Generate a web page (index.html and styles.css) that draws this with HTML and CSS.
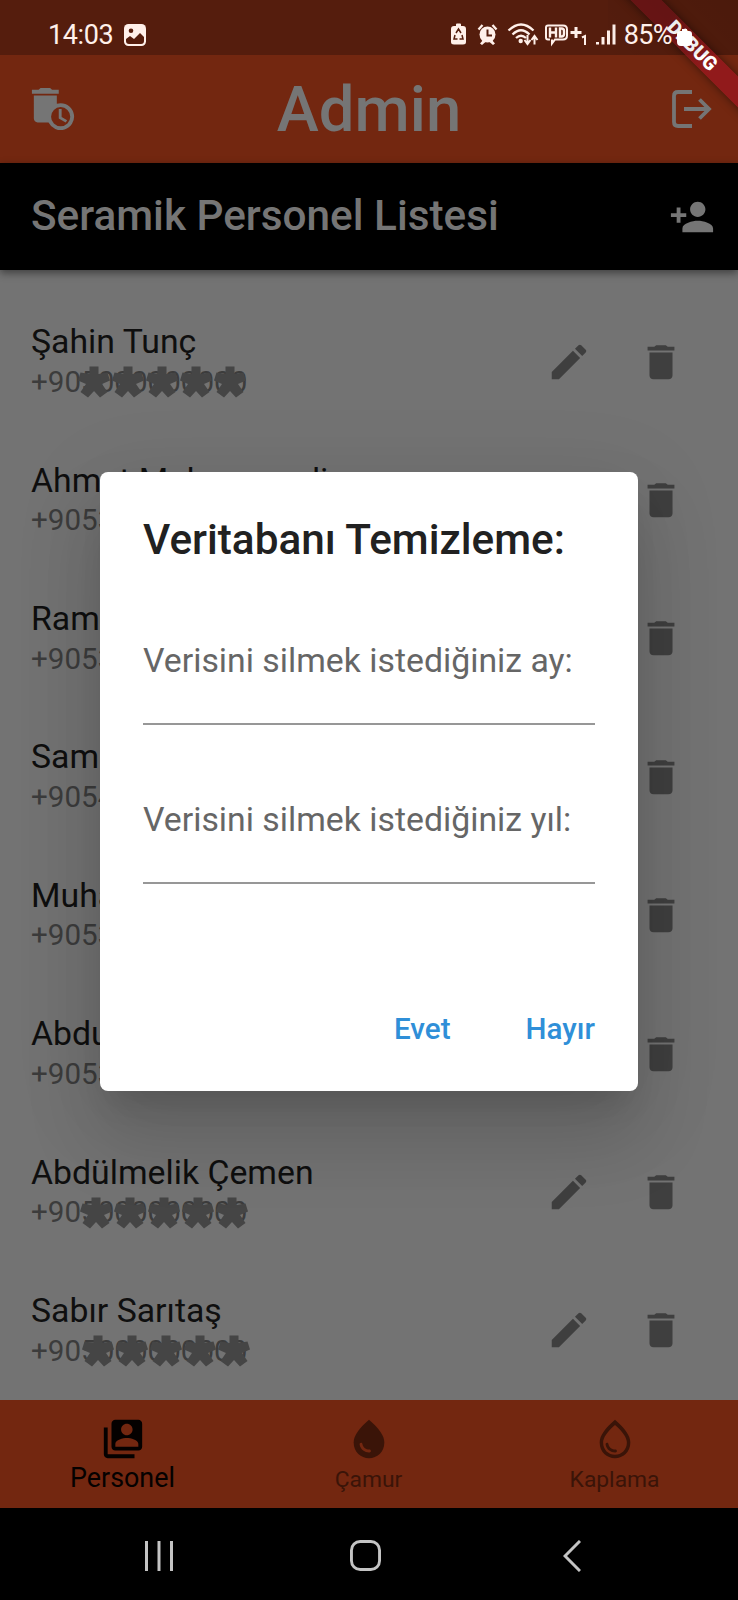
FILE: index.html
```html
<!DOCTYPE html>
<html lang="tr">
<head>
<meta charset="utf-8">
<title>Admin</title>
<link rel="stylesheet" href="styles.css">
</head>
<body>
<svg class="defs" width="0" height="0" aria-hidden="true">
  <symbol id="edit" viewBox="0 0 24 24"><path d="M3 17.25V21h3.75L17.81 9.94l-3.75-3.75L3 17.25zM20.71 7.04a1 1 0 0 0 0-1.41l-2.34-2.34a1 1 0 0 0-1.41 0l-1.83 1.83 3.75 3.75 1.83-1.83z"/></symbol>
  <symbol id="trash" viewBox="0 0 24 24"><path d="M6 19c0 1.1.9 2 2 2h8c1.1 0 2-.9 2-2V7H6v12zM19 4h-3.500l-1-.8h-5l-1 .8H5v2h14V4z"/></symbol>
  <symbol id="star" viewBox="-17 -17 34 34"><path d="M-4.500-15.500H4.500V-8L13.500-9.500L16-1.500L8 2L13.500 10L6 15.500L0 9L-6 15.500L-13.500 10L-8 2L-16-1.500L-13.500-9.500L-4.500-8z" fill="currentColor"/></symbol>
</svg>
<div class="screen">
  <header class="status">
    <span class="clock">14:03</span>
    <svg class="st-pic" viewBox="0 0 22 22"><rect width="22" height="22" rx="4.500" fill="#fff0ea"/><circle cx="7" cy="6.800" r="2.300" fill="#551d0d"/><path d="M2 15l4-3 4 3 6-6 4 4v4q0 3-3 3H5q-3 0-3-3z" fill="#551d0d"/></svg>
    <span class="grow"></span>
    <svg class="st-icons" viewBox="0 0 170 26">
      <g fill="#fff0ea">
        <path d="M6 4V2.500Q6 1.500 7 1.500h3q1 0 1 1V4h2q3 0 3 3v13q0 2.500-3 2.500H4Q1 22.500 1 20V7q0-3 3-3z"/>
        <circle cx="37.500" cy="12.500" r="8"/>
        <path d="M33 18l-3 3.500 2 1.500 3.500-3zM42 18l3 3.500-2 1.500-3.500-3z"/>
        <circle cx="70.700" cy="19" r="2.200"/>
        <rect x="146" y="20" width="3" height="2.500"/><rect x="151.500" y="15" width="3" height="7.500"/><rect x="157" y="8.500" width="3" height="14"/><rect x="162.500" y="2.500" width="3" height="20"/>
      </g>
      <g fill="none" stroke="#551d0d" stroke-width="1.500"><path d="M6 11l2.500-4 2.500 4M12 13l1 4H9.500M7.500 17H4l1-4"/><path stroke-width="2" d="M37.500 7.500v6h4.500"/></g>
      <g fill="none" stroke="#fff0ea" stroke-width="2.300">
        <path d="M28.500 7.500l4-4.500M46.500 7.500l-4-4.500"/>
        <path d="M58.500 8.500Q71-3.500 83.500 8.500M62.500 12.500Q71 4 79.500 12.500M66 16Q71 11.500 76 16"/>
        <path stroke-width="2" d="M77.500 13v8M74.500 18l3 4 3-4M84.500 22.500V15M81.500 18l3-4 3 4"/>
        <path stroke-width="2" d="M100 17.500H98q-2 0-2-2V5.500q0-2 2-2h15q4 0 4 4v6q0 4-4 4h-8l-3 4v-4"/>
        <path stroke-width="2.400" d="M100 5.500v10M106 5.500v10M100 10.500h6M110 6.500v8h1.500q2.500 0 2.500-2.500v-3q0-2.500-2.500-2.500z"/>
        <path stroke-width="3" d="M120.500 10.500h11M126 5v11"/>
        <path stroke-width="2" d="M132 15.500l3-1.500v9"/>
      </g>
    </svg>
    <span class="percent">85%</span>
    <svg class="st-batt" viewBox="0 0 15 18"><path d="M5 0h5v2h2q3 0 3 3v8q0 4-4 4H4q-4 0-4-4V5q0-3 3-3h2z" fill="#fff"/></svg>
  </header>

  <div class="appbar">
    <svg class="icon" viewBox="0 0 24 24"><path d="M15 2h-3.500l-1-1h-5l-1 1H1v2h14z"/><path d="M16 9c-.7 0-1.370.1-2 .29V5H2v12c0 1.100.9 2 2 2h5.680A7 7 0 1 0 16 9zm0 12a5 5 0 1 1 0-10 5 5 0 0 1 0 10z"/><path d="M16.500 12H15v5l3.600 2.100.8-1.200-2.900-1.700z"/></svg>
    <h1>Admin</h1>
    <svg class="icon" viewBox="0 0 46 46"><path d="M23 6H9Q5 6 5 10v26Q5 40 9 40H23M15 23H40M30.500 13.500L40 23L30.500 32.500" fill="none" stroke="currentColor" stroke-width="3.800"/></svg>
  </div>

  <div class="subbar">
    <h2>Seramik Personel Listesi</h2>
    <svg class="icon" viewBox="0 0 24 24"><path d="M15 12c2.210 0 4-1.790 4-4s-1.790-4-4-4-4 1.790-4 4 1.790 4 4 4zm-9-2V7H4v3H1v2h3v3h2v-3h3v-2H6zm9 4c-2.670 0-8 1.340-8 4v2h16v-2c0-2.660-5.330-4-8-4z"/></svg>
  </div>

  <main class="list">
    <div class="row"><div class="who"><p class="name">Şahin Tunç</p><p class="phone">+905000000000<span class="mask"><svg><use href="#star"/></svg><svg><use href="#star"/></svg><svg><use href="#star"/></svg><svg><use href="#star"/></svg><svg><use href="#star"/></svg></span></p></div><svg class="icon"><use href="#edit"/></svg><svg class="icon"><use href="#trash"/></svg></div>
    <div class="row"><div class="who"><p class="name">Ahmet Muhammedi</p><p class="phone">+9053</p></div><svg class="icon"><use href="#edit"/></svg><svg class="icon"><use href="#trash"/></svg></div>
    <div class="row"><div class="who"><p class="name">Ram</p><p class="phone">+9053</p></div><svg class="icon"><use href="#edit"/></svg><svg class="icon"><use href="#trash"/></svg></div>
    <div class="row"><div class="who"><p class="name">Sam</p><p class="phone">+9054</p></div><svg class="icon"><use href="#edit"/></svg><svg class="icon"><use href="#trash"/></svg></div>
    <div class="row"><div class="who"><p class="name">Muha</p><p class="phone">+9053</p></div><svg class="icon"><use href="#edit"/></svg><svg class="icon"><use href="#trash"/></svg></div>
    <div class="row"><div class="who"><p class="name">Abdu</p><p class="phone">+9053</p></div><svg class="icon"><use href="#edit"/></svg><svg class="icon"><use href="#trash"/></svg></div>
    <div class="row"><div class="who"><p class="name">Abdülmelik Çemen</p><p class="phone">+905000000000<span class="mask mask-b"><svg><use href="#star"/></svg><svg><use href="#star"/></svg><svg><use href="#star"/></svg><svg><use href="#star"/></svg><svg><use href="#star"/></svg></span></p></div><svg class="icon"><use href="#edit"/></svg><svg class="icon"><use href="#trash"/></svg></div>
    <div class="row"><div class="who"><p class="name">Sabır Sarıtaş</p><p class="phone">+905000000000<span class="mask mask-c"><svg><use href="#star"/></svg><svg><use href="#star"/></svg><svg><use href="#star"/></svg><svg><use href="#star"/></svg><svg><use href="#star"/></svg></span></p></div><svg class="icon"><use href="#edit"/></svg><svg class="icon"><use href="#trash"/></svg></div>
  </main>

  <nav class="tabs">
    <div class="tab active"><svg class="icon" viewBox="0 0 24 24"><path d="M4 6H2v14c0 1.100.9 2 2 2h14v-2H4V6z"/><path fill-rule="evenodd" d="M20 2H8c-1.100 0-2 .9-2 2v12c0 1.100.9 2 2 2h12c1.100 0 2-.9 2-2V4c0-1.100-.9-2-2-2zm-6 2c1.660 0 3 1.340 3 3s-1.340 3-3 3-3-1.340-3-3 1.340-3 3-3zm6 12H8v-1.500c0-1.990 4-3 6-3s6 1.010 6 3V16z"/></svg><span>Personel</span></div>
    <div class="tab"><svg class="icon" viewBox="0 0 24 24"><path d="M12 2c-5.330 4.550-8 8.480-8 11.800C4 18.780 7.800 22 12 22s8-3.220 8-8.200c0-3.320-2.670-7.250-8-11.800z"/><path fill="#732710" d="M7.830 14c.37 0 .67.26.74.62.41 2.220 2.280 2.980 3.640 2.870.43-.02.79.32.79.75 0 .4-.32.73-.72.75-2.130.13-4.620-1.090-5.190-4.120a.75.75 0 0 1 .74-.87z"/></svg><span>Çamur</span></div>
    <div class="tab"><svg class="icon" viewBox="0 0 24 24"><path fill-rule="evenodd" d="M12 2c-5.330 4.550-8 8.480-8 11.800C4 18.780 7.800 22 12 22s8-3.220 8-8.200c0-3.320-2.670-7.250-8-11.800zm0 18.200c-3.350 0-6.200-2.570-6.200-6.400 0-2.340 1.950-5.440 6.200-9.140 4.250 3.700 6.200 6.790 6.200 9.140 0 3.830-2.850 6.400-6.200 6.400z"/><path d="M7.830 14c.37 0 .67.26.74.62.41 2.220 2.280 2.980 3.640 2.870.43-.02.79.32.79.75 0 .4-.32.73-.72.75-2.130.13-4.620-1.090-5.190-4.120a.75.75 0 0 1 .74-.87z"/></svg><span>Kaplama</span></div>
  </nav>

  <footer class="system">
    <svg class="recents" viewBox="0 0 30 32"><path d="M2.500 1v30M15 1v30M27.500 1v30"/></svg>
    <svg class="home" viewBox="0 0 32 32"><rect x="1.500" y="1.500" width="29" height="29" rx="9"/></svg>
    <svg class="back" viewBox="0 0 18 32"><path d="M17 1L2 16L17 31"/></svg>
  </footer>

  <section class="dialog">
    <h3>Veritabanı Temizleme:</h3>
    <div class="field">Verisini silmek istediğiniz ay:</div>
    <div class="field">Verisini silmek istediğiniz yıl:</div>
    <div class="actions"><span>Evet</span><span>Hayır</span></div>
  </section>

  <div class="debug"><div class="ribbon">DEBUG</div></div>
</div>
</body>
</html>
```
FILE: styles.css
```css
* { box-sizing: border-box; margin: 0; padding: 0; }
body { font-family: Roboto, "Noto Sans", sans-serif; background: #000; }
.defs { position: absolute; }
.screen { position: relative; width: 738px; height: 1600px; overflow: hidden; display: flex; flex-direction: column; background: #737373; }
svg { display: block; flex: none; }
.icon { width: 46px; height: 46px; fill: currentColor; }

.status { height: 54.500px; background: #551d0d; color: #fff0ea; display: flex; align-items: flex-start; padding: 0 46px 0 48px; font-size: 27px; line-height: 32px; flex: none; }
.clock { padding-top: 19px; letter-spacing: -.4px; }
.percent { padding-top: 19px; margin-left: 4px; letter-spacing: -.6px; position: relative; z-index: 4; }
.grow { flex: 1; }
.st-pic { width: 22px; height: 22px; margin: 24px 0 0 11px; }
.st-icons { width: 170px; height: 26px; margin-top: 22px; }
.st-batt { width: 15px; height: 18px; margin: 29px 0 0 5px; position: relative; z-index: 4; }

.appbar { height: 108px; flex: none; background: #732710; color: #757575; display: flex; align-items: center; justify-content: space-between; padding: 0 23px 0 30px; }
.appbar h1 { font-size: 63.400px; font-weight: 500; line-height: 74px; margin: 0 7px 0 0; }
.subbar { height: 107.500px; flex: none; background: #000; color: #757575; display: flex; align-items: center; justify-content: space-between; padding: 1px 23px 0 31px; box-shadow: 0 3px 8px rgba(0,0,0,.45); position: relative; }
.subbar h2 { font-size: 42.300px; font-weight: 500; line-height: 50px; padding-bottom: 1px; }

.list { flex: none; height: 1130px; padding-top: 22.500px; }
.row { height: 138.400px; display: flex; align-items: center; padding: 0 54px 0 31px; color: #3f3f3f; gap: 46.500px; }
.who { flex: 1; align-self: flex-start; padding-top: 29.800px; white-space: nowrap; }
.name { font-size: 33.800px; line-height: 40px; color: #0f0f0f; }
.phone { font-size: 29.600px; line-height: 38px; padding-top: .5px; color: #3c3c3c; position: relative; }
.mask { position: absolute; left: 45.500px; top: 3px; display: flex; color: #454545; }
.mask svg { width: 34px; height: 34px; }
.mask-b { left: 48px; }
.mask-c { left: 49.500px; }

.tabs { height: 107.500px; flex: none; background: #732710; color: #3a1408; display: flex; }
.tab { flex: 1; display: flex; flex-direction: column; align-items: center; padding-top: 15.500px; font-size: 22.800px; line-height: 32px; }
.tab span { padding-top: 2px; margin-right: 1px; }
.tab.active { color: #050100; font-size: 26.900px; }
.tab.active span { padding-top: 0; }

.system { flex: 1; background: #000; display: flex; align-items: flex-start; padding: 32.500px 0 0 144px; }
.system svg { fill: none; stroke: #c4c4c4; stroke-width: 3; height: 32px; }
.recents { width: 30px; }
.system .home { width: 31px; height: 31px; margin-left: 176px; }
.back { width: 18px; margin-left: 182px; }

.dialog { position: absolute; left: 100px; top: 472px; width: 538px; height: 618.500px; padding: 41px 43px 0; border-radius: 8px; background: #fff; box-shadow: 0 21px 29px -13px rgba(0,0,0,.12), 0 46px 73px 6px rgba(0,0,0,.12), 0 17px 88px 15px rgba(0,0,0,.06); }
.dialog h3 { font-size: 42.300px; font-weight: 500; line-height: 54px; color: #212121; }
.field { font-size: 33.800px; line-height: 40px; height: 159px; padding-top: 75px; color: #666; border-bottom: 2px solid #979797; white-space: nowrap; }
.dialog h3 + .field { height: 158px; padding-top: 74px; }
.actions { display: flex; justify-content: flex-end; gap: 75px; padding-top: 125px; font-size: 29.600px; font-weight: 500; line-height: 40px; color: #2f8fd8; }

.debug { position: absolute; right: 0; top: 0; width: 130px; height: 130px; overflow: hidden; z-index: 3; }
.debug::after { content: ""; position: absolute; left: 0; right: 0; top: 0; height: 54.500px; background: linear-gradient(45deg, transparent 0, rgba(0,0,0,.12)); }
.ribbon { position: absolute; left: -36px; top: 35px; width: 240px; height: 22px; transform: rotate(45deg); background: linear-gradient(90deg, #6c1515 35%, #911a1b 60%); color: #fff; font-size: 19.400px; font-weight: 900; line-height: 22px; text-align: center; box-shadow: 0 0 10px rgba(0,0,0,.5); }
```
